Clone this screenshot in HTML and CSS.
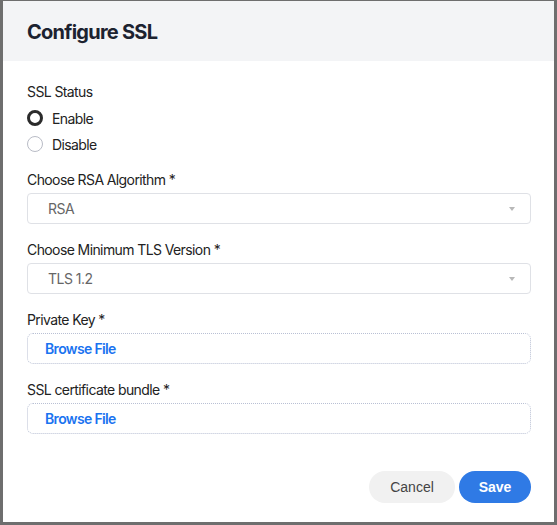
FILE: index.html
```html
<!DOCTYPE html>
<html>
<head>
<meta charset="utf-8">
<link rel="stylesheet" href="styles.css">
</head>
<body>
<div class="frame">
  <div class="header"><h1 class="title">Configure SSL</h1></div>
  <div class="content">
    <div class="label first">SSL Status</div>
    <div class="radio-row"><span class="radio checked"></span><span class="radio-label">Enable</span></div>
    <div class="radio-row"><span class="radio"></span><span class="radio-label">Disable</span></div>

    <div class="label gap">Choose RSA Algorithm *</div>
    <div class="select"><span class="select-value">RSA</span><span class="caret"></span></div>

    <div class="label gap">Choose Minimum TLS Version *</div>
    <div class="select"><span class="select-value">TLS 1.2</span><span class="caret"></span></div>

    <div class="label gap">Private Key *</div>
    <div class="file"><span class="browse">Browse File</span></div>

    <div class="label gap">SSL certificate bundle *</div>
    <div class="file"><span class="browse">Browse File</span></div>

    <div class="actions">
      <button class="btn cancel">Cancel</button>
      <button class="btn save">Save</button>
    </div>
  </div>
</div>
</body>
</html>
```
FILE: styles.css
```css
* { box-sizing: border-box; }
html, body { margin: 0; padding: 0; background: #fff; }
body { font-family: Inter, "Noto Sans", sans-serif; color: #222; }
.frame {
  width: 557px;
  height: 525px;
  border-style: solid;
  border-color: #6e6e6e;
  border-width: 1px 3px 3px 3px;
  background: #fff;
}
.header {
  height: 60px;
  background: #f3f4f6;
  display: flex;
  align-items: center;
  padding-left: 24px;
}
.title {
  margin: 0;
  font-size: 20px;
  font-weight: 700;
  color: #1c2230;
  letter-spacing: -0.75px;
  padding-top: 2px;
}
.content { padding: 0 23px 0 24px; }
.label {
  font-size: 14px;
  line-height: 20px;
  color: #222;
  letter-spacing: -0.6px;
  margin-bottom: 3px;
}
.label.first { margin-top: 21px; margin-bottom: 6px; }
.label.gap { margin-top: 16px; }
.radio-row {
  display: flex;
  align-items: center;
  height: 20px;
  margin-bottom: 6px;
}
.radio {
  width: 16px;
  height: 16px;
  border-radius: 50%;
  border: 1px solid #b9bcc6;
  margin-right: 9px;
  background: #fff;
}
.radio.checked { border: 3.5px solid #2b2b2b; }
.radio-label { font-size: 14px; color: #222; letter-spacing: -0.6px; }
.select {
  height: 31px;
  border: 1px solid #dfe1e6;
  border-radius: 4px;
  display: flex;
  align-items: center;
  padding: 0 15px 0 20px;
}
.select-value { flex: 1; font-size: 14px; color: #666; letter-spacing: -0.5px; }
.caret {
  width: 0; height: 0;
  border-left: 3px solid transparent;
  border-right: 3px solid transparent;
  border-top: 4px solid #b8b8b8;
}
.file {
  height: 31px;
  border: 1px dotted #b9c0d4;
  border-radius: 6px;
  display: flex;
  align-items: center;
  padding-left: 17px;
}
.browse { font-size: 14px; font-weight: 600; color: #1a73f0; letter-spacing: -0.65px; }
.actions {
  display: flex;
  justify-content: flex-end;
  gap: 4px;
  margin-top: 37px;
}
.btn {
  height: 32px;
  border: none;
  border-radius: 16px;
  font-family: "Liberation Sans", Arial, sans-serif;
  font-size: 14px;
  padding: 0;
}
.cancel { width: 86px; background: #f1f1f1; color: #444; }
.save { width: 72px; background: #2f7ae5; color: #fff; font-weight: 700; }
```
